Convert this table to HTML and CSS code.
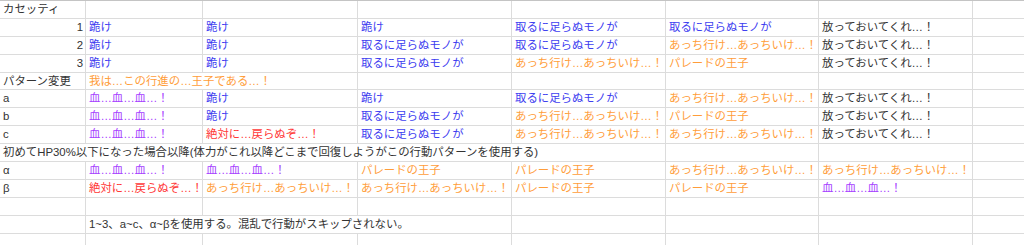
FILE: index.html
```html
<!DOCTYPE html>
<html lang="ja">
<head>
<meta charset="utf-8">
<title>Sheet</title>
<link rel="stylesheet" href="styles.css">
</head>
<body>
<div class="sheet">
  <div class="c">カセッティ</div><div class="c"></div><div class="c"></div><div class="c"></div><div class="c"></div><div class="c"></div><div class="c"></div><div class="c"></div>

  <div class="c num">1</div><div class="c blue">跪け</div><div class="c blue">跪け</div><div class="c blue">跪け</div><div class="c blue">取るに足らぬモノが</div><div class="c blue">取るに足らぬモノが</div><div class="c dark">放っておいてくれ…！</div><div class="c"></div>

  <div class="c num">2</div><div class="c blue">跪け</div><div class="c blue">跪け</div><div class="c blue">取るに足らぬモノが</div><div class="c blue">取るに足らぬモノが</div><div class="c orange">あっち行け…あっちいけ…！</div><div class="c dark">放っておいてくれ…！</div><div class="c"></div>

  <div class="c num">3</div><div class="c blue">跪け</div><div class="c blue">跪け</div><div class="c blue">取るに足らぬモノが</div><div class="c orange">あっち行け…あっちいけ…！</div><div class="c orange">パレードの王子</div><div class="c dark">放っておいてくれ…！</div><div class="c"></div>

  <div class="c">パターン変更</div><div class="c orange span2">我は…この行進の…王子である…！</div><div class="c"></div><div class="c"></div><div class="c"></div><div class="c"></div><div class="c"></div>

  <div class="c">a</div><div class="c purple">血…血…血…！</div><div class="c blue">跪け</div><div class="c blue">跪け</div><div class="c blue">取るに足らぬモノが</div><div class="c orange">あっち行け…あっちいけ…！</div><div class="c dark">放っておいてくれ…！</div><div class="c"></div>

  <div class="c">b</div><div class="c purple">血…血…血…！</div><div class="c blue">跪け</div><div class="c blue">取るに足らぬモノが</div><div class="c orange">あっち行け…あっちいけ…！</div><div class="c orange">パレードの王子</div><div class="c dark">放っておいてくれ…！</div><div class="c"></div>

  <div class="c">c</div><div class="c purple">血…血…血…！</div><div class="c red">絶対に…戻らぬぞ…！</div><div class="c blue">取るに足らぬモノが</div><div class="c orange">あっち行け…あっちいけ…！</div><div class="c orange">あっち行け…あっちいけ…！</div><div class="c dark">放っておいてくれ…！</div><div class="c"></div>

  <div class="c span5">初めてHP30%以下になった場合以降(体力がこれ以降どこまで回復しようがこの行動パターンを使用する)</div><div class="c"></div><div class="c"></div><div class="c"></div>

  <div class="c">α</div><div class="c purple">血…血…血…！</div><div class="c purple">血…血…血…！</div><div class="c orange">パレードの王子</div><div class="c orange">パレードの王子</div><div class="c orange">あっち行け…あっちいけ…！</div><div class="c orange">あっち行け…あっちいけ…！</div><div class="c"></div>

  <div class="c">β</div><div class="c red">絶対に…戻らぬぞ…！</div><div class="c orange">あっち行け…あっちいけ…！</div><div class="c orange">あっち行け…あっちいけ…！</div><div class="c orange">パレードの王子</div><div class="c orange">パレードの王子</div><div class="c purple">血…血…血…！</div><div class="c"></div>

  <div class="c"></div><div class="c"></div><div class="c"></div><div class="c"></div><div class="c"></div><div class="c"></div><div class="c"></div><div class="c"></div>

  <div class="c"></div><div class="c span3">1~3、a~c、α~βを使用する。混乱で行動がスキップされない。</div><div class="c"></div><div class="c"></div><div class="c"></div><div class="c"></div>

  <div class="c"></div><div class="c"></div><div class="c"></div><div class="c"></div><div class="c"></div><div class="c"></div><div class="c"></div><div class="c"></div>
</div>
</body>
</html>
```

FILE: styles.css
```css
html, body {
  margin: 0;
  padding: 0;
  background: #ffffff;
}

body {
  width: 1024px;
  height: 245px;
  overflow: hidden;
}

.sheet {
  display: grid;
  grid-template-columns: 85px 116px 154px 153px 153px 152px 153px 60px;
  grid-auto-rows: 16.9px;
  gap: 1px;
  background: #dcdcdc;
  border-top: 1px solid #c4c4c4;
  font-family: "Liberation Sans", "Noto Sans CJK JP", sans-serif;
  font-size: 11.4px;
  color: #333333;
}

.c {
  background: #ffffff;
  padding: 0 2px 0 3px;
  line-height: 16.9px;
  white-space: nowrap;
  overflow: hidden;
}

.num { text-align: right; }
.span2 { grid-column: span 2; }
.span3 { grid-column: span 3; }
.span5 { grid-column: span 5; }

.blue { color: #4040f0; }
.orange { color: #ff9d3a; }
.purple { color: #a640ff; }
.red { color: #ff3838; }
.dark { color: #333333; }
```
